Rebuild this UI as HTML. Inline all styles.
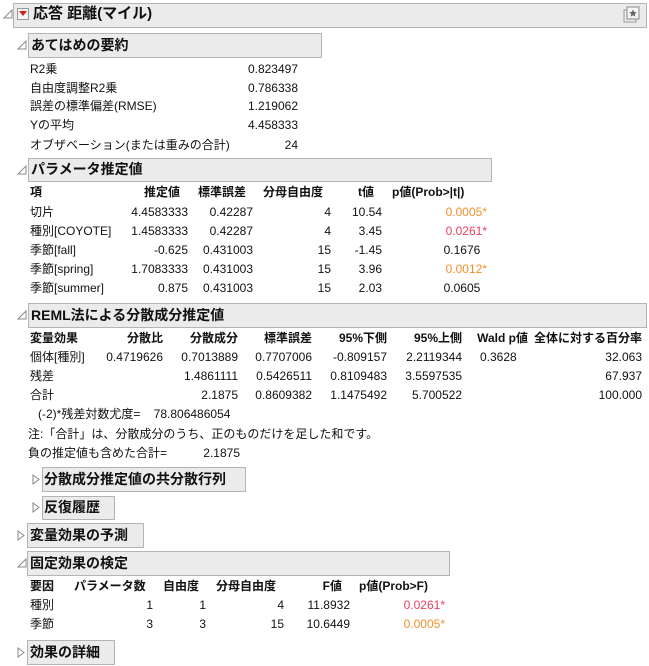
<!DOCTYPE html>
<html><head><meta charset="utf-8"><style>
body{margin:0;width:649px;height:666px;background:#fff;position:relative;overflow:hidden;font-family:"Liberation Sans","Noto Sans CJK JP",sans-serif;font-size:12px;color:#111}
.a{position:absolute;white-space:nowrap;line-height:19px}
.box{position:absolute;background:#ebebeb;border:1px solid #b4b4b4;box-sizing:border-box}
.h{position:absolute;white-space:nowrap;font-weight:bold;font-size:14px;line-height:18px}
.b{font-weight:bold}
.o{color:#f0902a}.r{color:#e8405a}
svg.a{line-height:0}
</style></head><body>
<!-- top -->
<div class="box" style="left:13px;top:3px;width:634px;height:25px"></div>
<svg class="a" style="left:3px;top:9px" width="10" height="10"><path d="M1 9 L9 9 L9 1 Z" fill="none" stroke="#888"/></svg>
<div style="position:absolute;left:17px;top:8px;width:12px;height:12px;border:1px solid #999;background:#f4f4f4;box-sizing:border-box"></div>
<svg class="a" style="left:19px;top:11px" width="9" height="6"><path d="M0 0 L8 0 L4 5 Z" fill="#d02020"/></svg>
<div class="h" style="left:33px;top:5px;font-size:15px">応答 距離(マイル)</div>
<svg class="a" style="left:623px;top:6px" width="18" height="18"><rect x="1" y="4" width="12" height="12" fill="none" stroke="#999"/><rect x="4" y="1" width="12" height="12" fill="#f4f4f4" stroke="#888"/><path d="M10 3.5 L11.2 6 L13.8 6.3 L11.8 8 L12.4 10.6 L10 9.3 L7.6 10.6 L8.2 8 L6.2 6.3 L8.8 6 Z" fill="#666"/></svg>

<!-- fit summary -->
<div class="box" style="left:28px;top:33px;width:294px;height:25px"></div>
<svg class="a" style="left:17px;top:40px" width="10" height="10"><path d="M1 9 L9 9 L9 1 Z" fill="none" stroke="#888"/></svg>
<div class="h" style="left:31px;top:36px">あてはめの要約</div>
<div class="a" style="left:30px;top:60px">R2乗</div><div class="a" style="right:351px;top:60px">0.823497</div>
<div class="a" style="left:30px;top:79px">自由度調整R2乗</div><div class="a" style="right:351px;top:79px">0.786338</div>
<div class="a" style="left:30px;top:97px">誤差の標準偏差(RMSE)</div><div class="a" style="right:351px;top:97px">1.219062</div>
<div class="a" style="left:30px;top:116px">Yの平均</div><div class="a" style="right:351px;top:116px">4.458333</div>
<div class="a" style="left:30px;top:136px">オブザベーション(または重みの合計)</div><div class="a" style="right:351px;top:136px">24</div>

<!-- params -->
<div class="box" style="left:28px;top:158px;width:464px;height:24px"></div>
<svg class="a" style="left:17px;top:165px" width="10" height="10"><path d="M1 9 L9 9 L9 1 Z" fill="none" stroke="#888"/></svg>
<div class="h" style="left:31px;top:160px">パラメータ推定値</div>
<div class="a b" style="left:30px;top:183px">項</div>
<div class="a b" style="right:469px;top:183px">推定値</div>
<div class="a b" style="right:403px;top:183px">標準誤差</div>
<div class="a b" style="left:263px;top:183px">分母自由度</div>
<div class="a b" style="right:275px;top:183px">t値</div>
<div class="a b" style="left:392px;top:183px">p値(Prob&gt;|t|)</div>
<div class="a" style="left:30px;top:203px">切片<br>種別[COYOTE]<br>季節[fall]<br>季節[spring]<br>季節[summer]</div>
<div class="a" style="right:461px;top:203px;text-align:right">4.4583333<br>1.4583333<br>-0.625<br>1.7083333<br>0.875</div>
<div class="a" style="right:396px;top:203px;text-align:right">0.42287<br>0.42287<br>0.431003<br>0.431003<br>0.431003</div>
<div class="a" style="right:318px;top:203px;text-align:right">4<br>4<br>15<br>15<br>15</div>
<div class="a" style="right:267px;top:203px;text-align:right">10.54<br>3.45<br>-1.45<br>3.96<br>2.03</div>
<div class="a" style="right:162px;top:203px;text-align:right"><span class="o">0.0005*</span><br><span class="r">0.0261*</span><br>0.1676&nbsp;&nbsp;<br><span class="o">0.0012*</span><br>0.0605&nbsp;&nbsp;</div>

<!-- REML -->
<div class="box" style="left:28px;top:303px;width:619px;height:25px"></div>
<svg class="a" style="left:17px;top:310px" width="10" height="10"><path d="M1 9 L9 9 L9 1 Z" fill="none" stroke="#888"/></svg>
<div class="h" style="left:31px;top:306px">REML法による分散成分推定値</div>
<div class="a b" style="left:30px;top:329px">変量効果</div>
<div class="a b" style="right:486px;top:329px">分散比</div>
<div class="a b" style="right:411px;top:329px">分散成分</div>
<div class="a b" style="right:337px;top:329px">標準誤差</div>
<div class="a b" style="right:262px;top:329px">95%下側</div>
<div class="a b" style="right:187px;top:329px">95%上側</div>
<div class="a b" style="right:121px;top:329px">Wald p値</div>
<div class="a b" style="right:7px;top:329px">全体に対する百分率</div>
<div class="a" style="left:30px;top:348px">個体[種別]<br>残差<br>合計</div>
<div class="a" style="right:486px;top:348px">0.4719626</div>
<div class="a" style="right:411px;top:348px;text-align:right">0.7013889<br>1.4861111<br>2.1875</div>
<div class="a" style="right:337px;top:348px;text-align:right">0.7707006<br>0.5426511<br>0.8609382</div>
<div class="a" style="right:262px;top:348px;text-align:right">-0.809157<br>0.8109483<br>1.1475492</div>
<div class="a" style="right:187px;top:348px;text-align:right">2.2119344<br>3.5597535<br>5.700522</div>
<div class="a" style="left:480px;top:348px">0.3628</div>
<div class="a" style="right:7px;top:348px;text-align:right">32.063<br>67.937<br>100.000</div>
<div class="a" style="left:38px;top:405px">(-2)*残差対数尤度=&nbsp;&nbsp;&nbsp;&nbsp;78.806486054</div>
<div class="a" style="left:28px;top:425px">注:「合計」は、分散成分のうち、正のものだけを足した和です。</div>
<div class="a" style="left:28px;top:444px">負の推定値も含めた合計=</div><div class="a" style="right:409px;top:444px">2.1875</div>

<div class="box" style="left:42px;top:467px;width:204px;height:25px"></div>
<svg class="a" style="left:32px;top:474px" width="8" height="11"><path d="M1 1 L7 5.5 L1 10 Z" fill="none" stroke="#888"/></svg>
<div class="h" style="left:44px;top:470px">分散成分推定値の共分散行列</div>
<div class="box" style="left:42px;top:496px;width:73px;height:24px"></div>
<svg class="a" style="left:32px;top:502px" width="8" height="11"><path d="M1 1 L7 5.5 L1 10 Z" fill="none" stroke="#888"/></svg>
<div class="h" style="left:44px;top:498px">反復履歴</div>

<div class="box" style="left:27px;top:523px;width:117px;height:25px"></div>
<svg class="a" style="left:17px;top:530px" width="8" height="11"><path d="M1 1 L7 5.5 L1 10 Z" fill="none" stroke="#888"/></svg>
<div class="h" style="left:30px;top:526px">変量効果の予測</div>

<div class="box" style="left:27px;top:551px;width:423px;height:25px"></div>
<svg class="a" style="left:17px;top:558px" width="10" height="10"><path d="M1 9 L9 9 L9 1 Z" fill="none" stroke="#888"/></svg>
<div class="h" style="left:30px;top:554px">固定効果の検定</div>
<div class="a b" style="left:30px;top:577px">要因</div>
<div class="a b" style="left:74px;top:577px">パラメータ数</div>
<div class="a b" style="left:163px;top:577px">自由度</div>
<div class="a b" style="left:216px;top:577px">分母自由度</div>
<div class="a b" style="right:307px;top:577px">F値</div>
<div class="a b" style="left:359px;top:577px">p値(Prob&gt;F)</div>
<div class="a" style="left:30px;top:596px">種別<br>季節</div>
<div class="a" style="right:496px;top:596px;text-align:right">1<br>3</div>
<div class="a" style="right:443px;top:596px;text-align:right">1<br>3</div>
<div class="a" style="right:365px;top:596px;text-align:right">4<br>15</div>
<div class="a" style="right:299px;top:596px;text-align:right">11.8932<br>10.6449</div>
<div class="a" style="right:204px;top:596px;text-align:right"><span class="r">0.0261*</span><br><span class="o">0.0005*</span></div>

<div class="box" style="left:27px;top:640px;width:88px;height:25px"></div>
<svg class="a" style="left:17px;top:647px" width="8" height="11"><path d="M1 1 L7 5.5 L1 10 Z" fill="none" stroke="#888"/></svg>
<div class="h" style="left:30px;top:643px">効果の詳細</div>
</body></html>
